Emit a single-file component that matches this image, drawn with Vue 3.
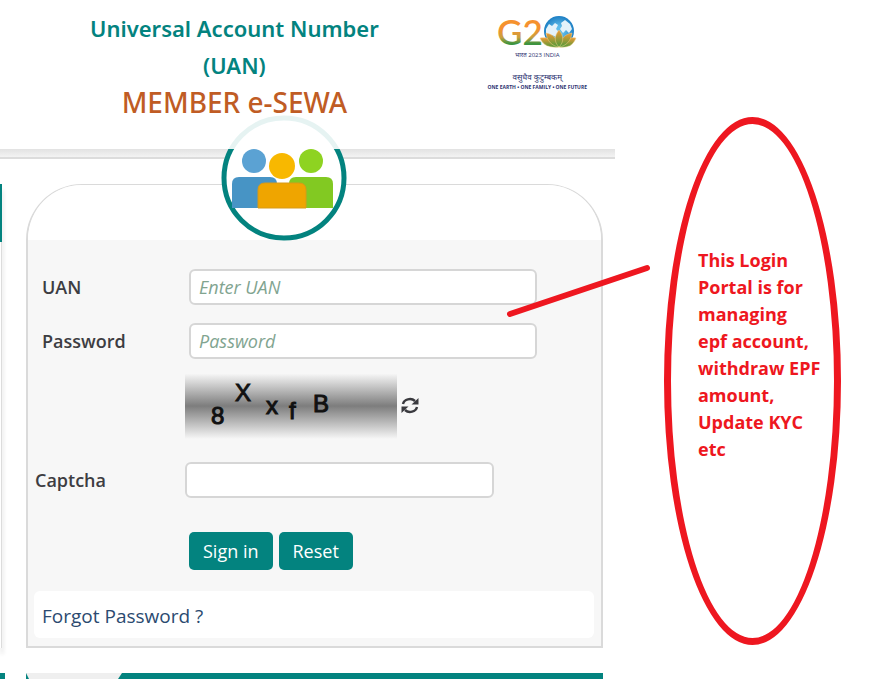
<template>
  <div class="page">
    <div class="portal">
      <header class="header">
        <h1 class="title">
          <span class="title-main">Universal Account Number<br />(UAN)</span>
          <span class="title-sub">MEMBER e-SEWA</span>
        </h1>

        <div class="g20">
          <svg class="g20-logo" viewBox="0 0 82 42" role="img" aria-label="G20">
            <defs>
              <linearGradient id="tricolor" x1="0" y1="0" x2="0" y2="1">
                <stop offset="0.45" stop-color="#f5922f" />
                <stop offset="0.65" stop-color="#c9a040" />
                <stop offset="0.8" stop-color="#3d9440" />
              </linearGradient>
              <linearGradient id="petal" x1="0" y1="0" x2="0" y2="1">
                <stop offset="0" stop-color="#f09a35" />
                <stop offset="1" stop-color="#4d9a3a" />
              </linearGradient>
              <radialGradient id="globe">
                <stop offset="0.3" stop-color="#5fbcea" />
                <stop offset="1" stop-color="#1d7fc4" />
              </radialGradient>
            </defs>
            <text x="1" y="35" class="g20-text" fill="url(#tricolor)">G2</text>
            <g transform="translate(0 5)">
              <circle cx="63" cy="16" r="15" fill="url(#globe)" />
              <path d="M50 14l3-5 3 2 3-3 3 2-2 4 3 3-3 5-4-2-3 2-3-2zM65 8l4-3 5 4 2 5-3 4-3-3-3 3-3-4 2-3z" fill="#e4f2fa" />
              <g fill="url(#petal)" stroke="#f7d08a" stroke-width="0.5">
                <path d="M44 23c8-1 14 1 19 9-8 1-16-1-19-9z" />
                <path d="M80 23c-6-1-12 1-17 9 8 1 14-1 17-9z" />
                <path d="M50 18c6 1 12 5 13 14-7-1-12-6-13-14z" />
                <path d="M76 18c-6 1-12 5-13 14 7-1 12-6 13-14z" />
                <path d="M63 15c5 6 5 12 0 17-5-5-5-11 0-17z" />
              </g>
            </g>
          </svg>
          <p class="g20-year">भारत 2023 INDIA</p>
          <p class="g20-hindi">वसुधैव कुटुम्बकम्</p>
          <p class="g20-motto">ONE EARTH • ONE FAMILY • ONE FUTURE</p>
        </div>
      </header>

      <div class="strip"></div>

      <main class="main">
        <div class="side-panel"></div>

        <section class="card">
          <div class="badge">
            <svg viewBox="0 0 126 126" aria-hidden="true">
              <circle cx="63" cy="63" r="60" fill="#fff" stroke="#03837f" stroke-width="5" />
              <circle cx="33" cy="46" r="12" fill="#5ba2d3" />
              <circle cx="90" cy="46" r="12" fill="#8ed321" />
              <path d="M11 93V69q0-7 7-7h31q7 0 7 7v24z" fill="#4794c5" />
              <path d="M68 93V69q0-7 7-7h30q7 0 7 7v24z" fill="#82c922" />
              <circle cx="61" cy="51" r="13" fill="#f8b800" />
              <path d="M37 93V75q0-7 7-7h34q7 0 7 7v18z" fill="#efa500" stroke="#d79a18" />
            </svg>
          </div>
          <div class="card-top"></div>

          <form class="form" @submit.prevent>
            <div class="row">
              <label for="uan">UAN</label>
              <input id="uan" v-model="uan" type="text" placeholder="Enter UAN" />
            </div>
            <div class="row">
              <label for="password">Password</label>
              <input id="password" v-model="password" type="password" placeholder="Password" />
            </div>

            <div class="captcha-row">
              <svg class="captcha-image" viewBox="0 0 212 66" role="img" aria-label="Captcha">
                <text v-for="c in captchaChars" :key="c.x" :x="c.x" :y="c.y">{{ c.text }}</text>
              </svg>
              <button type="button" class="refresh" aria-label="Refresh captcha" @click="captcha = ''">
                <svg viewBox="0 0 18 18">
                  <path d="M2 7a7 6 0 0 1 12-3M16 10a7 6 0 0 1-12 3" fill="none" stroke="#3a3a3f" stroke-width="2.4" />
                  <path d="M17.500 1v6.500h-7zM.5 16V9.500h7z" fill="#3a3a3f" />
                </svg>
              </button>
            </div>

            <div class="row row-captcha">
              <label for="captcha">Captcha</label>
              <input id="captcha" v-model="captcha" type="text" />
            </div>

            <div class="actions">
              <button type="submit" class="btn">Sign in</button>
              <button type="button" class="btn" @click="reset">Reset</button>
            </div>
          </form>

          <div class="forgot">
            <a href="#">Forgot Password ?</a>
          </div>
        </section>
      </main>

      <div class="tabs">
        <div class="tabs-side"></div>
        <div class="tabs-bar">
          <svg viewBox="0 0 96 6" aria-hidden="true">
            <path d="M0 0h96l-4 6H3z" fill="#efefef" />
          </svg>
        </div>
      </div>
    </div>

    <aside class="note">
      <svg class="pointer" viewBox="0 0 146 54" aria-hidden="true">
        <path d="M4 50L141 4" stroke="#ee1720" stroke-width="6" stroke-linecap="round" />
      </svg>
      <div class="bubble">
        <p>This Login<br />Portal is for<br />managing<br />epf account,<br />withdraw EPF<br />amount,<br />Update KYC<br />etc</p>
      </div>
    </aside>
  </div>
</template>

<script setup>
import { ref } from 'vue';

const uan = ref('');
const password = ref('');
const captcha = ref('');

const captchaChars = [
  { text: '8', x: 26, y: 51 },
  { text: 'X', x: 50, y: 28 },
  { text: 'x', x: 81, y: 41 },
  { text: 'f', x: 104, y: 46 },
  { text: 'B', x: 128, y: 39 }
];

const reset = () => {
  uan.value = '';
  password.value = '';
  captcha.value = '';
};
</script>

<style>
    body {
        background: #fff;
    }
</style>

<style scoped>
    .page {
        display: grid;
        grid-template-columns: minmax(0, 1fr) 259px;
        overflow: hidden;
        font-family: "Open Sans", "Noto Sans", sans-serif;
        font-size: 18px;
        color: #3d3d42;
    }

    .header {
        position: relative;
        z-index: 2;
        display: flex;
        justify-content: space-between;
        box-sizing: border-box;
        height: 149px;
        padding: 10px 28px 0 90px;
        background: rgba(255, 255, 255, 0.9);
    }

    .title {
        display: flex;
        flex-direction: column;
        margin: 0;
        text-align: center;
        font-family: "Noto Sans", sans-serif;
        font-weight: 600;
        line-height: 37px;
        white-space: nowrap;
    }

    .title-main {
        font-size: 22px;
        color: #03837f;
    }

    .title-sub {
        font-size: 28px;
        font-weight: 500;
        color: #c05c24;
    }

    .g20 {
        display: flex;
        flex-direction: column;
        align-items: center;
        color: #2b3270;
        white-space: nowrap;
    }

    .g20 p {
        margin: 0;
    }

    .g20-logo {
        width: 82px;
        height: 42px;
    }

    .g20-text {
        font-family: Lato, sans-serif;
        font-size: 35px;
        font-weight: 600;
    }

    .g20 .g20-year {
        font-size: 6px;
        line-height: 6px;
    }

    .g20 .g20-hindi {
        margin-top: 13px;
        font-size: 8px;
        line-height: 12px;
    }

    .g20 .g20-motto {
        font-size: 5px;
        font-weight: 700;
        line-height: 8px;
    }

    .strip {
        height: 8px;
        border-bottom: 2px solid #dcdcdc;
        background: linear-gradient(#e2e2e2, #f3f3f3);
    }

    .main {
        display: flex;
        gap: 21px;
        padding: 25px 12px 25px 0;
    }

    .side-panel {
        box-sizing: border-box;
        width: 2px;
        margin-right: 3px;
        border-right: 1px solid #dcdcdc;
        box-shadow: 1px 6px 4px #dddddd;
    }

    .side-panel::before {
        content: "";
        display: block;
        width: 2px;
        height: 58px;
        background: #03837f;
    }

    .card {
        position: relative;
        flex: 1;
        border: 2px solid #dadada;
        border-top-width: 1px;
        border-radius: 56px 56px 0 0;
        background: #f7f7f7;
    }

    .card-top {
        height: 55px;
        border-radius: 54px 54px 0 0;
        background: #fff;
    }

    .badge {
        position: absolute;
        top: -70px;
        left: 193px;
        width: 126px;
        height: 126px;
    }

    .badge svg,
    .refresh svg,
    .captcha-image,
    .tabs-bar svg {
        display: block;
    }

    .form {
        display: flex;
        flex-direction: column;
        padding-top: 29px;
    }

    .row {
        display: flex;
        align-items: center;
        margin-bottom: 18px;
        padding: 0 64px 0 14px;
    }

    .row label {
        width: 147px;
        font-weight: 600;
    }

    .row input {
        flex: 1;
        min-width: 0;
        box-sizing: border-box;
        height: 36px;
        padding: 0 8px;
        border: 2px solid #d6d6d6;
        border-radius: 6px;
        background: #fff;
        color: #3d3d42;
        font: inherit;
    }

    .row input::placeholder {
        color: #81a490;
        font-style: italic;
        opacity: 1;
    }

    .captcha-row {
        display: flex;
        align-items: center;
        gap: 4px;
        margin: -4px 0 23px;
        padding-left: 157px;
    }

    .captcha-image {
        width: 212px;
        height: 66px;
        background: linear-gradient(#f9f9f9, #7d7d7d 50%, #f7f7f7);
    }

    .captcha-image text {
        font-family: "Liberation Sans", sans-serif;
        font-size: 24px;
        fill: #111;
        stroke: #111;
        stroke-width: 1px;
    }

    .refresh {
        width: 18px;
        height: 18px;
        padding: 0;
        border: none;
        background: none;
        cursor: pointer;
    }

    .row-captcha {
        margin-bottom: 34px;
        padding: 0 107px 0 7px;
    }

    .row-captcha label {
        width: 150px;
    }

    .actions {
        display: flex;
        gap: 6px;
        padding-left: 161px;
    }

    .btn {
        height: 38px;
        padding: 0 14px;
        border: none;
        border-radius: 5px;
        background: #03837f;
        color: #fff;
        font: inherit;
        cursor: pointer;
    }

    .btn:hover {
        background: #026e6a;
    }

    .forgot {
        margin: 21px 7px 8px 6px;
        padding: 3px 8px 0;
        border-radius: 6px;
        background: #fff;
        font-size: 19px;
        line-height: 44px;
    }

    .forgot a {
        color: #2b4a70;
        text-decoration: none;
    }

    .tabs {
        display: flex;
        gap: 21px;
        padding-right: 12px;
    }

    .tabs-side {
        width: 5px;
        background: #03837f;
    }

    .tabs-bar {
        flex: 1;
        height: 6px;
        background: #03837f;
    }

    .tabs-bar svg {
        width: 96px;
        height: 6px;
    }

    .note {
        position: relative;
        z-index: 3;
        padding: 117px 33px 0 49px;
    }

    .pointer {
        position: absolute;
        top: 264px;
        left: -109px;
        width: 146px;
        height: 54px;
    }

    .bubble {
        display: flex;
        align-items: center;
        box-sizing: border-box;
        height: 528px;
        padding: 0 0 52px 27px;
        border: 7px solid #ee1720;
        border-radius: 50%;
    }

    .bubble p {
        margin: 0;
        color: #ee1720;
        font-size: 18px;
        font-weight: 700;
        line-height: 27px;
        white-space: nowrap;
    }
</style>
